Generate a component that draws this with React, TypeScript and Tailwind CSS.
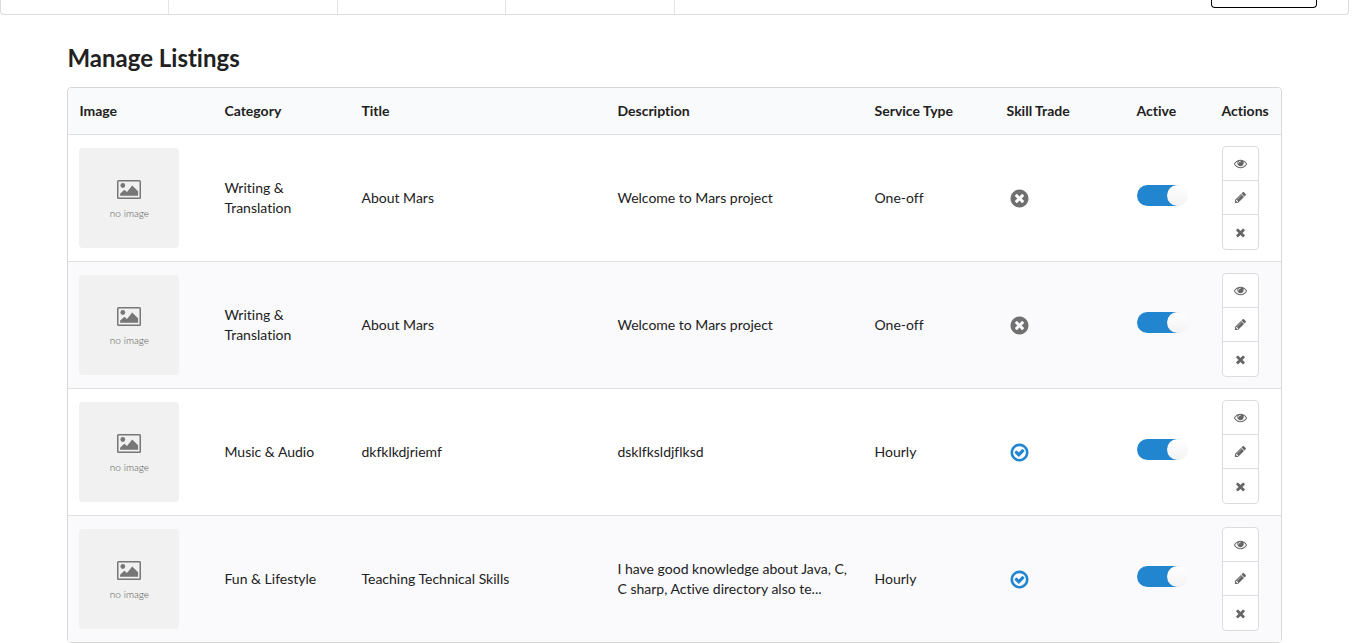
import { useState } from "react";

type Listing = {
  id: number;
  category: string;
  title: string;
  description: string;
  serviceType: string;
  skillTrade: boolean;
};

const listings: Listing[] = [
  { id: 1, category: "Writing & Translation", title: "About Mars", description: "Welcome to Mars project", serviceType: "One-off", skillTrade: false },
  { id: 2, category: "Writing & Translation", title: "About Mars", description: "Welcome to Mars project", serviceType: "One-off", skillTrade: false },
  { id: 3, category: "Music & Audio", title: "dkfklkdjriemf", description: "dsklfksldjflksd", serviceType: "Hourly", skillTrade: true },
  { id: 4, category: "Fun & Lifestyle", title: "Teaching Technical Skills", description: "I have good knowledge about Java, C, C sharp, Active directory also te...", serviceType: "Hourly", skillTrade: true },
];

const icons = {
  eye: "M1664 960q-152-236-381-353 61 104 61 225 0 185-131.500 316.500t-316.500 131.500-316.500-131.500-131.500-316.500q0-121 61-225-229 117-381 353 133 205 333.500 326.500t434.500 121.500 434.500-121.500 333.500-326.500zm-720-384q0-20-14-34t-34-14q-125 0-214.500 89.500t-89.500 214.500q0 20 14 34t34 14 34-14 14-34q0-86 61-147t147-61q20 0 34-14t14-34zm848 384q0 34-20 69-140 230-376.500 368.500t-499.500 138.500-499.500-139-376.500-368q-20-35-20-69t20-69q140-229 376.500-368t499.500-139 499.500 139 376.500 368q20 35 20 69z",
  pencil: "M491 1536l91-91-235-235-91 91v107h128v128h107zm523-928q0-22-22-22-10 0-17 7l-542 542q-7 7-7 17 0 22 22 22 10 0 17-7l542-542q7-7 7-17zm-54-192l416 416-832 832h-416v-416zm683 96q0 53-37 90l-166 166-416-416 166-165q36-38 90-38 53 0 91 38l235 234q37 39 37 91z",
  remove: "M1490 1322q0 40-28 68l-136 136q-28 28-68 28t-68-28l-294-294-294 294q-28 28-68 28t-68-28l-136-136q-28-28-28-68t28-68l294-294-294-294q-28-28-28-68t28-68l136-136q28-28 68-28t68 28l294 294 294-294q28-28 68-28t68 28l136 136q28 28 28 68t-28 68l-294 294 294 294q28 28 28 68z",
  removeCircle: "M1277 1122q0-26-19-45l-181-181 181-181q19-19 19-45 0-27-19-46l-90-90q-19-19-46-19-26 0-45 19l-181 181-181-181q-19-19-45-19-27 0-46 19l-90 90q-19 19-19 46 0 26 19 45l181 181-181 181q-19 19-19 45 0 27 19 46l90 90q19 19 46 19 26 0 45-19l181-181 181 181q19 19 45 19 27 0 46-19l90-90q19-19 19-46zm387-226q0 209-103 385.500t-279.500 279.500-385.500 103-385.500-103-279.500-279.500-103-385.500 103-385.500 279.500-279.500 385.500-103 385.500 103 279.500 279.500 103 385.500z",
  checkCircle: "M1299 813l-422 422q-19 19-45 19t-45-19l-294-294q-19-19-19-45t19-45l102-102q19-19 45-19t45 19l147 147 275-275q19-19 45-19t45 19l102 102q19 19 19 45t-19 45zm141 83q0-148-73-273t-198-198-273-73-273 73-198 198-73 273 73 273 198 198 273 73 273-73 198-198 73-273zm224 0q0 209-103 385.500t-279.500 279.500-385.500 103-385.500-103-279.500-279.500-103-385.500 103-385.500 279.500-279.500 385.500-103 385.500 103 279.500 279.500 103 385.500z",
};

function Icon({ name, className }: { name: keyof typeof icons; className: string }) {
  return (
    <svg viewBox="0 0 1792 1792" fill="currentColor" aria-hidden="true" className={className}>
      <path d={icons[name]} />
    </svg>
  );
}

function NoImage() {
  return (
    <div className="flex size-[100px] flex-col items-center justify-center gap-2 rounded bg-[#f1f1f1] pt-0.5 text-[#777777]">
      <svg viewBox="0 0 24 19" fill="currentColor" aria-hidden="true" className="h-[19px] w-6">
        <path fillRule="evenodd" d="M1.500 0h21A1.500 1.500 0 0 1 24 1.500v16a1.500 1.500 0 0 1-1.500 1.500h-21A1.500 1.500 0 0 1 0 17.500v-16A1.500 1.500 0 0 1 1.500 0zM1.500 1.500v16h21v-16z" />
        <circle cx="5.800" cy="5.500" r="2.400" />
        <path d="M3.100 15.800v-2l4.200-4.100 2.700 2.200 5.200-6.500 5.900 5.800v4.600z" />
      </svg>
      <span className="text-[10px] leading-3 font-light text-[#555555]">no image</span>
    </div>
  );
}

function Toggle({ label }: { label: string }) {
  const [on, setOn] = useState(true);
  return (
    <label className="flex h-[27px] cursor-pointer items-start">
      <input type="checkbox" className="peer sr-only" aria-label={label} checked={on} onChange={() => setOn(!on)} />
      <span className="flex h-[21px] w-[49px] rounded-full bg-[#dcddde] peer-checked:bg-[#2185d0] peer-checked:pl-[30px]">
        <span className="size-[21px] shrink-0 rounded-full bg-white bg-linear-to-b from-white to-[#f3f3f3]" />
      </span>
    </label>
  );
}

const actions = [
  { icon: "eye", label: "View" },
  { icon: "pencil", label: "Edit" },
  { icon: "remove", label: "Delete" },
] as const;

function Actions({ title }: { title: string }) {
  return (
    <div className="inline-flex w-[37px] flex-col divide-y divide-[#dcdcdd] rounded border border-[#dcdcdd] bg-white align-middle">
      {actions.map((a) => (
        <button key={a.label} type="button" aria-label={`${a.label} ${title}`} className="flex h-[34px] cursor-pointer items-center justify-center text-[#666666]">
          <Icon name={a.icon} className="size-[13px]" />
        </button>
      ))}
    </div>
  );
}

const columns = [
  { name: "Image", width: "w-[145px]" },
  { name: "Category", width: "w-[137px]" },
  { name: "Title", width: "w-[256px]" },
  { name: "Description", width: "" },
  { name: "Service Type", width: "w-[132px]" },
  { name: "Skill Trade", width: "w-[130px]" },
  { name: "Active", width: "w-[85px]" },
  { name: "Actions", width: "w-[70px]" },
];

const cell = "border-t border-[#dfe0e1] px-[11px] py-0";

export default function App() {
  return (
    <div className="bg-white pr-[17px] font-[Lato,sans-serif] text-sm leading-5 text-[#212121] [font-variant-ligatures:none]">
      <nav aria-label="Sections" className="flex h-[15px] justify-between rounded-b border border-t-0 border-[#dcdcdd]">
        <div className="grid w-1/2 grid-cols-4">
          <div className="border-r border-[#e4e4e5]" />
          <div className="border-r border-[#e4e4e5]" />
          <div className="border-r border-[#e4e4e5]" />
          <div className="border-r border-[#e4e4e5]" />
        </div>
        <button type="button" aria-label="Account" className="mr-[31px] h-2 w-[106px] rounded-b border border-t-0 border-black" />
      </nav>

      <main className="mx-auto w-9/10 pt-7">
        <h1 className="text-2xl leading-[30px] font-bold">Manage Listings</h1>
        <table className="mt-[14px] w-full table-fixed border-separate border-spacing-0 rounded border border-[#d8d8d9] text-left">
          <thead>
            <tr className="h-[46px]">
              {columns.map((c) => (
                <th key={c.name} scope="col" className={`${c.width} bg-[#f9fafb] px-[11px] font-bold whitespace-nowrap first:rounded-tl last:rounded-tr`}>
                  {c.name}
                </th>
              ))}
            </tr>
          </thead>
          <tbody>
            {listings.map((l) => (
              <tr key={l.id} className="h-[127px] even:bg-[#fafafc]">
                <td className={cell}><NoImage /></td>
                <td className={cell}>{l.category}</td>
                <td className={cell}>{l.title}</td>
                <td className={cell}>{l.description}</td>
                <td className={cell}>{l.serviceType}</td>
                <td className={cell}>
                  {l.skillTrade ? (
                    <Icon name="checkCircle" className="ml-0.5 size-[21px] text-[#2185d0]" />
                  ) : (
                    <Icon name="removeCircle" className="ml-0.5 size-[21px] text-[#707070]" />
                  )}
                </td>
                <td className={cell}><Toggle label={`${l.title} active`} /></td>
                <td className={cell}><Actions title={l.title} /></td>
              </tr>
            ))}
          </tbody>
        </table>
      </main>
    </div>
  );
}
